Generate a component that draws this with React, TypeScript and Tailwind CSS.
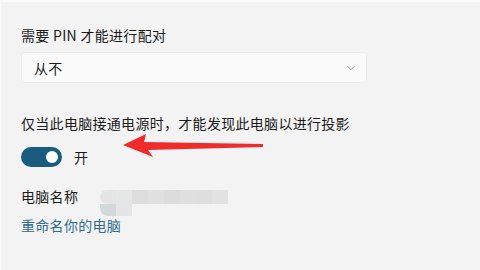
import { ChevronDown } from "lucide-react";

const font = { fontFamily: '"Noto Sans CJK SC", "Noto Sans", sans-serif' };

// pixelated blur that hides the computer name
const mosaicTop = ["#e6e6e6", "#dddddd", "#e0e0e0", "#dcdcdc", "#dfdfdf", "#dedede", "#e2e2e2"];

const App = () => {
  return (
    <div
      className="relative w-[480px] h-[270px] overflow-hidden bg-[#f3f3f3] border-t-2 border-l border-[#fafafa] text-[#1b1b1b] tracking-[0.3px]"
      style={font}
    >
      <div className="pl-[20px] pt-[23px]">
        <p className="text-[14px] leading-[20px]">需要 PIN 才能进行配对</p>

        <div className="mt-[7px] w-[346px] h-[31px] flex items-center justify-between pl-[12px] pr-[8px] bg-[#fbfbfb] border border-[#ececec] rounded-[4px]">
          <span className="text-[14px] leading-[20px]">从不</span>
          <ChevronDown className="w-[14px] h-[14px] text-[#8a8a8a]" strokeWidth={1.5} />
        </div>

        <p className="mt-[30px] text-[14px] leading-[20px]">仅当此电脑接通电源时，才能发现此电脑以进行投影</p>

        <div className="mt-[14px] flex items-center gap-[12px]">
          <div className="w-[41px] h-[20px] rounded-full bg-[#1a5c7e] flex items-center justify-end pr-[4px]">
            <div className="w-[12px] h-[12px] rounded-full bg-white" />
          </div>
          <span className="text-[14px] leading-[20px]">开</span>
        </div>

        <div className="relative mt-[19px]">
          <p className="text-[14px] leading-[20px]">电脑名称</p>
          <p className="mt-[9px] text-[14px] leading-[20px] text-[#2f6b8c]">重命名你的电脑</p>

          <div className="absolute left-[79px] top-[4px] flex flex-col">
            <div className="flex h-[14px]">
              <div className="w-[16px] rounded-l-full bg-[#e4e4e4]" />
              {mosaicTop.map((c, i) => (
                <div key={i} className="w-[16px] h-full" style={{ background: c }} />
              ))}
            </div>
            <div className="flex h-[12px]">
              <div className="w-[16px] rounded-bl-[8px] bg-[#d3d8db]" />
              <div className="w-[16px] h-full bg-[#e3e5e6]" />
            </div>
          </div>
        </div>
      </div>

      {/* red annotation arrow */}
      <svg className="absolute left-0 top-0" width="480" height="270" viewBox="0 0 480 270">
        <polygon
          points="122,143 145,132 143,140 262,142 262,145 147,148 152,155"
          fill="#ef2b2b"
        />
      </svg>
    </div>
  );
};

export default App;
